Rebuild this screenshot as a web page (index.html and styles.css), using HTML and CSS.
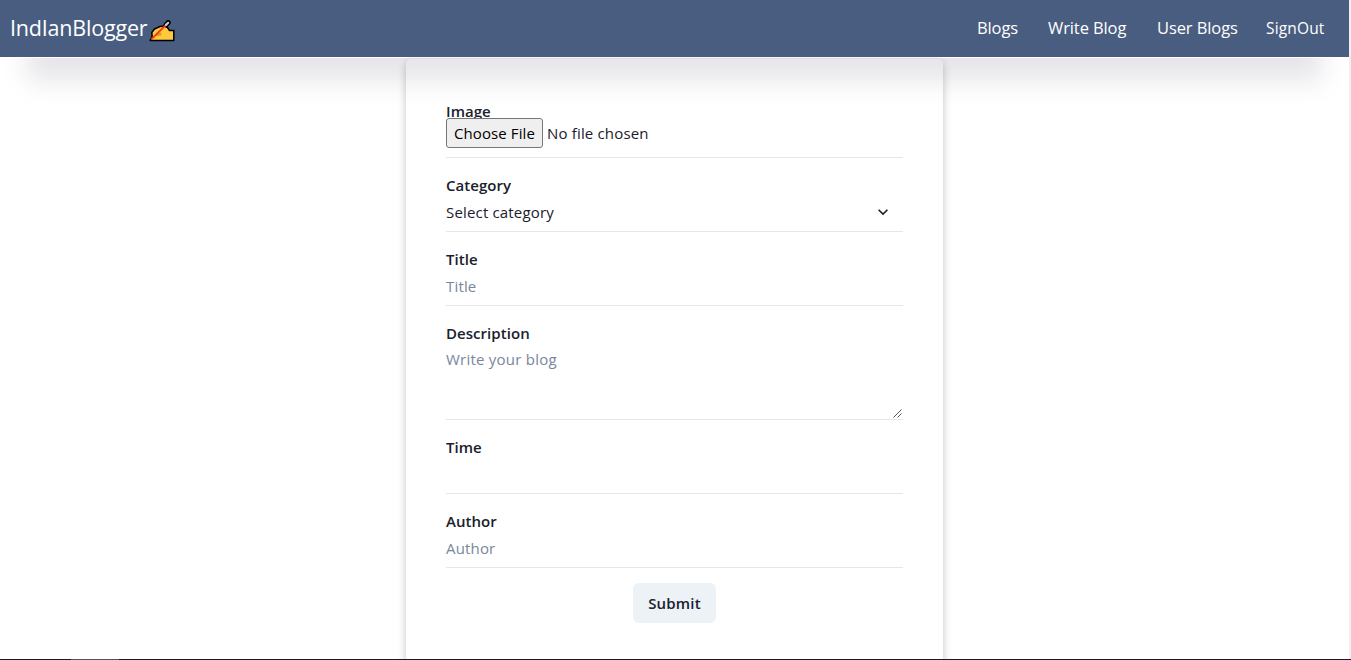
FILE: index.html
```html
<!DOCTYPE html>
<html lang="en">
<head>
<meta charset="utf-8">
<title>IndIanBlogger</title>
<link rel="stylesheet" href="styles.css">
</head>
<body>
<div class="page">
  <header class="navbar">
    <div class="brand"><span class="brand-name">IndIanBlogger</span>
      <svg class="brand-icon" viewBox="0 0 26 22" width="26" height="22">
        <path d="M17 5 L19.3 2.6" stroke="#000" stroke-width="5" stroke-linecap="round"/>
        <path d="M1.2 20.4 L3.2 16.5 L2.8 12.5 L5.5 9 L11 6.5 L15 6 L18.5 7.5 L20.5 10.6 H24.8 V20.4 Z" fill="#ffc83d" stroke="#000" stroke-width="1.5" stroke-linejoin="round"/>
        <path d="M7 13 L12.5 12.5 L12 15.5 L7 16Z" fill="#d99a1c"/>
        <path d="M2.2 19.4 L17 4.9" stroke="#f03a17" stroke-width="1.9"/>
        <path d="M17 4.9 L19.2 2.8" stroke="#c9ccd2" stroke-width="2.2" stroke-linecap="round"/>
      </svg>
    </div>
    <nav class="links">
      <a class="link-blogs">Blogs</a><a class="link-write">Write Blog</a><a class="link-user">User Blogs</a><a class="signout">SignOut</a>
    </nav>
    <div class="nav-shade"><div class="nav-shade-box"></div></div>
  </header>
  <main class="card">
    <div class="field"><div class="label">Image</div>
      <div class="control file"><button class="choose">Choose File</button><span class="nofile">No file chosen</span></div></div>
    <div class="field"><div class="label">Category</div>
      <div class="control select"><span>Select category</span>
        <svg class="chevron" viewBox="0 0 24 24" width="20" height="20"><path fill="#1a202c" d="M16.59 8.59L12 13.17 7.41 8.59 6 10l6 6 6-6z"/></svg></div></div>
    <div class="field"><div class="label">Title</div><div class="control hint">Title</div></div>
    <div class="field"><div class="label">Description</div>
      <div class="control area hint"><span>Write your blog</span>
        <svg class="grip" viewBox="0 0 9 9" width="9" height="9"><path d="M.5 8.5L8.5.5M4.5 8.5L8.5 4.5" stroke="#555" fill="none"/></svg></div></div>
    <div class="field"><div class="label">Time</div><div class="control"></div></div>
    <div class="field"><div class="label">Author</div><div class="control hint">Author</div></div>
    <button class="submit">Submit</button>
  </main>
</div>
<div class="edge"></div>
<div class="taskbar"><i></i></div>
</body>
</html>
```
FILE: styles.css
```css
* { box-sizing: border-box; }
body {
  margin: 0;
  height: 660px;
  overflow: hidden;
  background: #fff;
  color: #1a202c;
  font-family: "Open Sans", "Noto Sans", sans-serif;
  font-size: 15px;
  line-height: 24px;
}
.page { width: 1349px; height: 659px; overflow: hidden; }
.navbar {
  position: relative;
  display: flex;
  justify-content: space-between;
  height: 57px;
  padding: 0 25px 0 10px;
  background: #485d7f;
  color: #fff;
}
.brand { display: flex; align-items: center; font-size: 21.5px; letter-spacing: -.2px; white-space: nowrap; }
.brand-name { width: 138px; margin-top: -1px; }
.brand-icon { margin: 4px 0 0 1px; }
.links { display: flex; gap: 30px; align-items: center; padding-bottom: 1px; font-size: 16.5px; letter-spacing: -.1px; white-space: nowrap; }
.link-blogs { width: 42px; }
.link-write { width: 79px; margin-left: -1px; }
.link-user { width: 80px; }
.signout { width: 58px; font-size: 15.5px; letter-spacing: .15px; margin-left: -1px; }
.nav-shade {
  position: absolute;
  left: 0;
  top: 58px;
  width: 1349px;
  height: 60px;
  overflow: hidden;
  pointer-events: none;
}
.nav-shade-box {
  height: 63px;
  margin: -40px 27px 0;
  background: rgba(17, 12, 46, .105);
  filter: blur(12px);
}
.card {
  display: flex;
  flex-direction: column;
  width: 537px;
  height: 640px;
  margin: 2px 0 0 406px;
  padding: 41px 40px 0;
  border-radius: 5px;
  background: #fff;
  box-shadow: rgba(0, 0, 0, .24) 0 3px 8px;
}
.field { margin-bottom: 16px; }
.label { height: 18px; font-weight: 550; font-size: 15px; line-height: 22px; letter-spacing: .05px; }
.control {
  position: relative;
  display: flex;
  align-items: center;
  width: 457px;
  height: 40px;
  border-bottom: 1px solid #e2e8f0;
  letter-spacing: .17px;
}
.hint { color: #7a869a; }
.file { align-items: flex-start; }
.choose {
  width: 97px;
  height: 30px;
  padding: 0;
  border: 1px solid #767676;
  border-radius: 3px;
  background: #efefef;
  color: #000;
  font: inherit;
  letter-spacing: .1px;
}
.nofile { margin: 3px 0 0 4px; }
.select { justify-content: space-between; }
.chevron { margin-right: 10px; }
.area { height: 80px; align-items: flex-start; padding-top: 7px; letter-spacing: .23px; }
.grip { position: absolute; right: 1px; bottom: 1px; }
.submit {
  align-self: center;
  width: 83px;
  height: 40px;
  margin-top: -1px;
  border: 0;
  border-radius: 6px;
  background: #edf2f7;
  color: #1a202c;
  font: 550 15px/24px "Open Sans", "Noto Sans", sans-serif;
  letter-spacing: .2px;
}
.edge { position: absolute; right: 0; top: 0; width: 2px; height: 659px; background: #f1f1f1; }
.taskbar { height: 1px; background: #1c1a1d; }
.taskbar i { display: block; width: 48px; height: 1px; margin-left: 71px; background: #555; }
```
